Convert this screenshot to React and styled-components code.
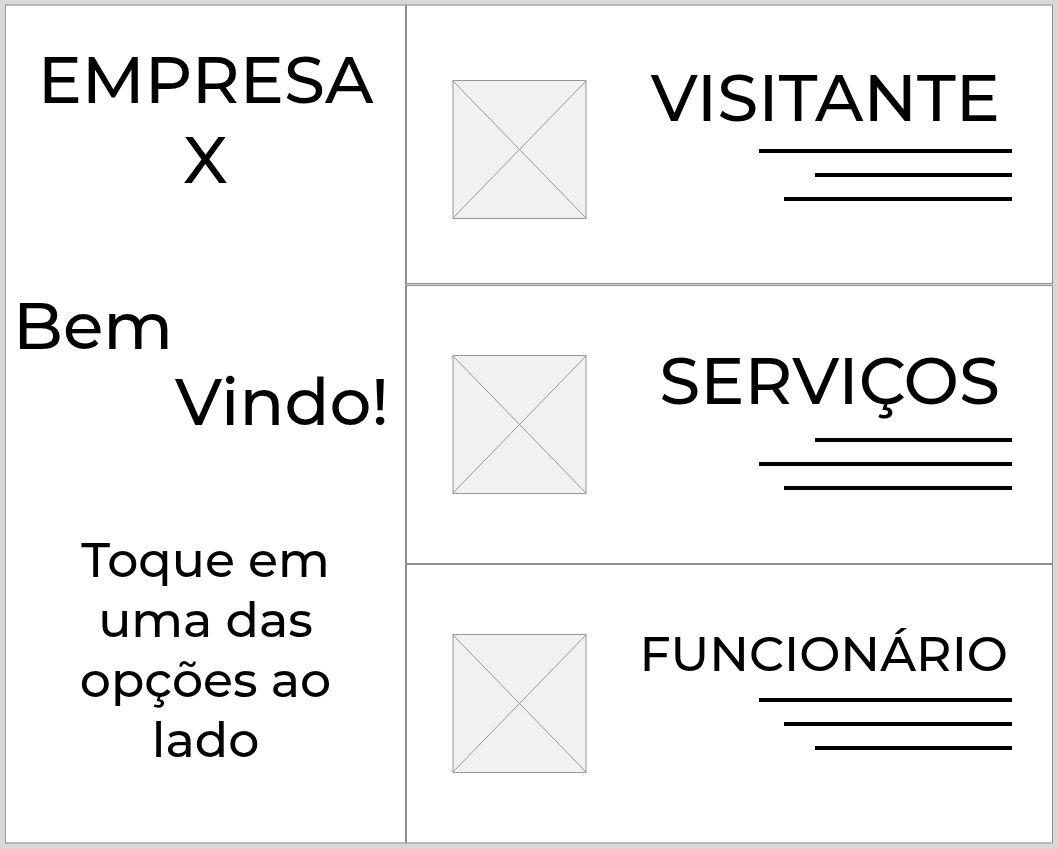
import React from "react";
import styled, { createGlobalStyle } from "styled-components";

const GlobalStyle = createGlobalStyle`
  * { box-sizing: border-box; }
  body {
    margin: 0;
    background: #d8d8d8;
    color: #000;
    font-family: Montserrat, Inter, "Liberation Sans", sans-serif;
    font-weight: 500;
  }
`;

const Screen = styled.main`
  display: grid;
  grid-template-columns: 401fr 647fr;
  min-height: 100vh;
  padding: 4px 5px 5px;
`;

const Welcome = styled.section`
  padding: 34px 0 24px;
  background: #fff;
  border: 1px solid #999;
  border-top: 2px solid #b9b9b9;
  border-bottom: 2px solid #b9b9b9;
  border-right-color: #8f8f8f;
`;

const Company = styled.h1`
  margin: 0 auto 88px;
  max-width: 352px;
  font-size: 66px;
  font-weight: 500;
  line-height: 80px;
  text-align: center;
`;

const Greeting = styled.p`
  display: flex;
  flex-direction: column;
  margin: 0 0 90px;
  padding: 0 16px 0 7px;
  font-size: 66px;
  line-height: 76px;
`;

const GreetingEnd = styled.span`
  align-self: flex-end;
`;

const Hint = styled.p`
  margin: 0 auto;
  max-width: 280px;
  font-size: 49px;
  line-height: 60px;
  text-align: center;
`;

const Options = styled.nav`
  display: grid;
  grid-template-rows: 281fr 279fr 280fr;
`;

const Option = styled.button`
  display: flex;
  justify-content: space-between;
  align-items: flex-start;
  gap: 24px;
  padding: 0 40px 24px 45px;
  background: #fff;
  border: 1px solid #8f8f8f;
  border-radius: 0;
  color: inherit;
  font: inherit;
  cursor: pointer;

  &:first-child {
    margin-bottom: 1px;
    border-top: 2px solid #b9b9b9;
  }
  &:last-child {
    border-bottom: 2px solid #b9b9b9;
  }
`;

const Picture = styled.svg`
  flex: none;
  width: 135px;
  height: 139px;
  margin-top: ${(p) => p.$top}px;
`;

const Details = styled.span`
  display: flex;
  flex-direction: column;
  align-items: flex-end;
  flex: 0 1 372px;
  margin-top: ${(p) => p.$top}px;
`;

const Title = styled.span`
  margin-right: ${(p) => (p.$small ? 4 : 12)}px;
  margin-bottom: ${(p) => (p.$small ? 14 : p.$roomy ? 17 : 11)}px;
  font-size: ${(p) => (p.$small ? 49 : 66)}px;
  line-height: ${(p) => (p.$small ? 60 : 80)}px;
  white-space: nowrap;
`;

const Lines = styled.span`
  display: flex;
  flex-direction: column;
  align-items: flex-end;
  gap: 20px;
  width: 100%;
`;

const Line = styled.span`
  width: ${(p) => p.$width}px;
  max-width: 100%;
  height: 4px;
  background: #000;
`;

const OPTIONS = [
  { title: "VISITANTE", pictureTop: 74, textTop: 52, lines: [253, 197, 228] },
  { title: "SERVIÇOS", pictureTop: 69, textTop: 55, roomy: true, lines: [197, 253, 228] },
  { title: "FUNCIONÁRIO", pictureTop: 69, textTop: 59, small: true, lines: [253, 228, 197] },
];

function Placeholder({ top }) {
  return (
    <Picture $top={top} viewBox="0 0 135 139" aria-hidden="true">
      <rect x="1" y="0.5" width="133" height="138" fill="#f1f1f1" stroke="#979797" />
      <path d="M1 1 134 138M134 1 1 138" stroke="#979797" fill="none" />
    </Picture>
  );
}

export default function App() {
  return (
    <>
      <GlobalStyle />
      <Screen>
        <Welcome>
          <Company>EMPRESA X</Company>
          <Greeting>
            <span>Bem</span>
            <GreetingEnd>Vindo!</GreetingEnd>
          </Greeting>
          <Hint>Toque em uma das opções ao lado</Hint>
        </Welcome>
        <Options aria-label="Opções">
          {OPTIONS.map((o) => (
            <Option key={o.title} type="button">
              <Placeholder top={o.pictureTop} />
              <Details $top={o.textTop}>
                <Title $small={o.small} $roomy={o.roomy}>{o.title}</Title>
                <Lines>
                  {o.lines.map((w) => (
                    <Line key={w} $width={w} />
                  ))}
                </Lines>
              </Details>
            </Option>
          ))}
        </Options>
      </Screen>
    </>
  );
}
